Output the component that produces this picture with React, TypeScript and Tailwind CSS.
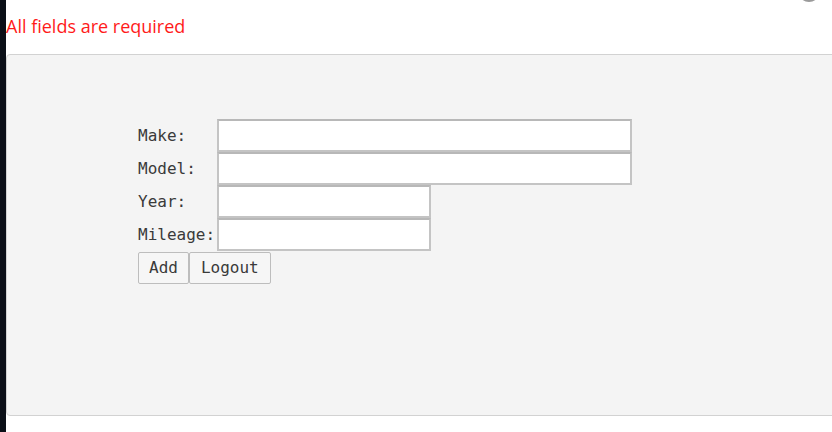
import React from 'react'

const mono = { fontFamily: '"DejaVu Sans Mono", "Liberation Mono", monospace' }

function Field({ label, wide }: { label: string; wide?: boolean }) {
  return (
    <div className="flex items-center h-[33px]">
      <label className="w-[79px] text-[16px] text-[#3a3a3a]">{label}</label>
      <input
        type="text"
        className={`h-[33px] bg-white border-2 border-[#c4c4c4] border-t-[#b8b8b8] outline-none ${wide ? 'w-[415px]' : 'w-[214px]'}`}
      />
    </div>
  )
}

export default function App() {
  return (
    <div className="relative flex w-[832px] h-[432px] bg-white overflow-hidden">
      <div className="w-[6px] shrink-0 bg-[#0b0f17]" />
      <div className="flex-1 flex flex-col">
        <div
          className="pt-[14px] text-[18px] leading-[24px] text-[#ff1a1a]"
          style={{ fontFamily: '"Open Sans", "Noto Sans", sans-serif' }}
        >
          All fields are required
        </div>
        <div className="mt-[16px] mr-[-10px] h-[362px] bg-[#f4f4f4] border border-[#d2d2d2] rounded-[4px] pt-[64px] pl-[131px]" style={mono}>
          <Field label="Make:" wide />
          <Field label="Model:" wide />
          <Field label="Year:" />
          <Field label="Mileage:" />
          <div className="flex mt-[1px]">
            <button className="h-[32px] px-[10px] text-[16px] text-[#3a3a3a] bg-[#f6f6f6] border border-[#bdbdbd] rounded-[2px]">
              Add
            </button>
            <button className="h-[32px] px-[11px] text-[16px] text-[#3a3a3a] bg-[#f6f6f6] border border-[#bdbdbd] rounded-[2px]">
              Logout
            </button>
          </div>
        </div>
      </div>
      <div className="absolute left-[798px] top-[-20px] w-[22px] h-[22px] rounded-full border-b-2 border-[#9a9a9a]" />
    </div>
  )
}
